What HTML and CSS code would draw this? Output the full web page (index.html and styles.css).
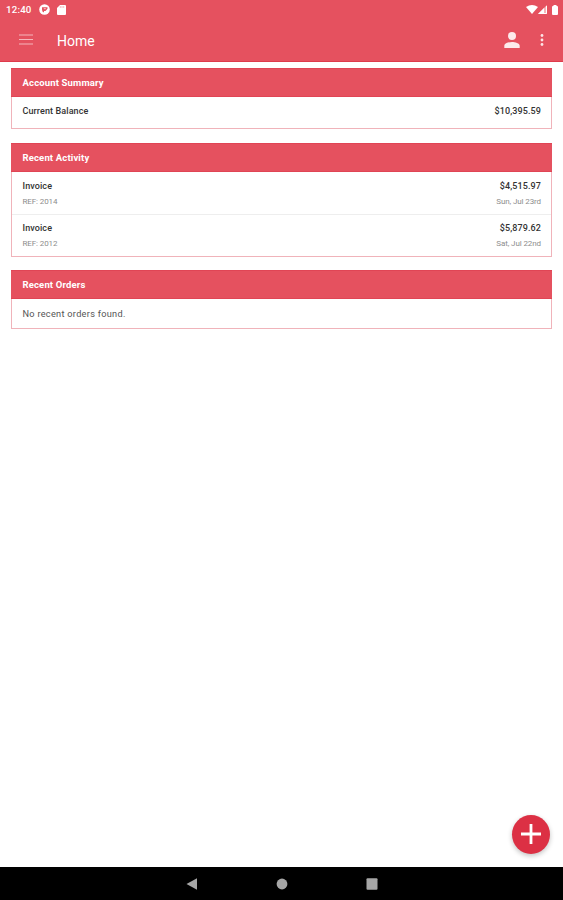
FILE: index.html
```html
<!DOCTYPE html>
<html lang="en">
<head>
<meta charset="utf-8">
<title>Home</title>
<link rel="stylesheet" href="styles.css">
</head>
<body>
<div class="screen">
  <header class="top">
    <div class="status">
      <span class="clock">12:40</span>
      <svg class="status-app" width="11" height="11" viewBox="0 0 11 11"><circle cx="5.5" cy="5.5" r="5.3" fill="#fff"/><path d="M3 3.200h5.500v1.600L6.500 7H5v1.500A3 3 0 0 1 3 5.500z" fill="#e5515f"/><path d="M4.800 4.700h2" stroke="#fff" stroke-width=".7"/></svg>
      <svg class="status-card" width="9" height="10" viewBox="0 0 9 10"><path d="M3 0h5a1 1 0 0 1 1 1v8a1 1 0 0 1-1 1H1a1 1 0 0 1-1-1V3z" fill="#fff"/><path d="M3.300 1.200v1.600M5 1.200v1.600M6.700 1.200v1.600" stroke="#f09aa3" stroke-width=".8"/></svg>
      <div class="signals">
        <svg width="12" height="9" viewBox="0 0 12 9"><path d="M0 2Q6-2 12 2L6 9z" fill="#fff"/></svg>
        <svg width="9" height="9" viewBox="0 0 9 9"><path d="M9 0v9H0z" fill="#f5b5ba"/><path d="M6 3v6H0z" fill="#fff"/><path d="M8.500 1v7.500H1" fill="none" stroke="#fff"/></svg>
        <svg class="battery" width="6" height="10" viewBox="0 0 6 10"><path d="M1.500 0h3v1H5a1 1 0 0 1 1 1v7a1 1 0 0 1-1 1H1a1 1 0 0 1-1-1V2a1 1 0 0 1 1-1h.5z" fill="#fff"/></svg>
      </div>
    </div>
    <div class="toolbar">
      <svg class="menu" width="14" height="11" viewBox="0 0 14 11"><path d="M0 1h14M0 5.500h14M0 10h14" stroke="#f6b6bc" stroke-width="1.100"/></svg>
      <h1>Home</h1>
      <svg class="person" width="16" height="16" viewBox="0 0 16 16"><circle cx="8" cy="4" r="4" fill="#fdeaec"/><path d="M.3 16v-2.200C.3 11 5 9.900 8 9.900s7.700 1.100 7.700 3.900V16z" fill="#fdeaec"/></svg>
      <svg class="more" width="4" height="12" viewBox="0 0 4 12"><g fill="#fde4e6"><circle cx="2" cy="1.500" r="1.400"/><circle cx="2" cy="6" r="1.400"/><circle cx="2" cy="10.500" r="1.400"/></g></svg>
    </div>
  </header>
  <main>
    <section class="card summary">
      <h2>Account Summary</h2>
      <div class="row"><b>Current Balance</b><b>$10,395.59</b></div>
    </section>
    <section class="card activity">
      <h2>Recent Activity</h2>
      <div class="entry">
        <div class="line"><b>Invoice</b><b>$4,515.97</b></div>
        <div class="line detail"><span>REF: 2014</span><span>Sun, Jul 23rd</span></div>
      </div>
      <div class="entry">
        <div class="line"><b>Invoice</b><b>$5,879.62</b></div>
        <div class="line detail"><span>REF: 2012</span><span>Sat, Jul 22nd</span></div>
      </div>
    </section>
    <section class="card orders">
      <h2>Recent Orders</h2>
      <p>No recent orders found.</p>
    </section>
  </main>
  <button class="add" aria-label="Add"><svg width="20" height="20" viewBox="0 0 20 20"><path d="M10 0v20M0 10h20" stroke="#fff" stroke-width="2.800"/></svg></button>
  <nav>
    <svg width="12" height="12" viewBox="0 0 12 12"><path d="M.5 6 11 .2v11.600z" fill="#a6a6a6"/></svg>
    <svg width="12" height="12" viewBox="0 0 12 12"><circle cx="6" cy="6" r="5.400" fill="#a6a6a6"/></svg>
    <svg width="12" height="12" viewBox="0 0 12 12"><rect x=".5" y=".3" width="11" height="11.400" rx="1" fill="#a6a6a6"/></svg>
  </nav>
</div>
</body>
</html>
```

FILE: styles.css
```css
* { box-sizing: border-box; }
body { margin: 0; background: #fff; font-family: Roboto, "Liberation Sans", sans-serif; }
.screen { position: relative; height: 900px; display: flex; flex-direction: column; overflow: hidden; }
svg { display: block; flex: none; }
.top { height: 62px; flex: none; background: #e5515f; border-bottom: 1px solid #df3a4b; color: #fff; }
.status { height: 19px; display: flex; align-items: center; padding: 0 5px 0 6px; }
.clock { width: 33px; font-size: 9.7px; font-weight: 500; letter-spacing: .2px; }
.status-card { margin-left: 7px; }
.signals { display: flex; align-items: center; margin-left: auto; }
.battery { margin-left: 5px; }
.toolbar { height: 42px; display: flex; align-items: center; padding: 0 19px; }
.menu { margin-bottom: 1px; }
h1 { flex: 1; margin: 1px 0 0 24px; font-size: 14px; line-height: 20px; font-weight: 400; letter-spacing: 0; color: #fff; }
.more { margin-left: 20px; }
main { flex: 1; padding: 6px 11px 0; }
.card { border: 1px solid #f0b3ba; border-top: 0; margin-bottom: 14px; color: #333; font-size: 9px; }
h2 { margin: 0 -1px; height: 29px; padding: 0 11.5px; background: #e5515f; border: 1px solid #e04555; border-width: 1px 0; color: #fff; font-size: 9.5px; line-height: 27px; font-weight: 700; letter-spacing: .15px; }
.row { height: 31px; padding: 0 10px 0 10.5px; display: flex; justify-content: space-between; line-height: 28px; }
.summary { height: 61px; }
.activity { height: 114px; margin-bottom: 13px; }
.orders { height: 59px; }
b { font-weight: 500; letter-spacing: .1px; }
.entry { height: 42px; padding: 6px 10px 0 10.5px; }
.entry + .entry { border-top: 1px solid #eee; padding-top: 5px; }
.line { display: flex; justify-content: space-between; height: 15px; line-height: 16px; }
.detail { color: #8d8d8d; font-size: 8px; height: 16px; line-height: 17px; letter-spacing: -.1px; }
p { margin: 0; padding: 0 10.5px; line-height: 29px; color: #555; font-size: 9.2px; letter-spacing: .28px; }
.add { position: absolute; left: 512px; top: 815px; width: 38px; height: 39px; border: 0; border-radius: 50%; padding: 0 0 2px; background: #dc3044; display: flex; align-items: center; justify-content: center; box-shadow: 0 2px 5px rgba(0,0,0,.24); }
nav { height: 33px; flex: none; background: #000; display: flex; justify-content: center; align-items: center; gap: 78px; }
```
